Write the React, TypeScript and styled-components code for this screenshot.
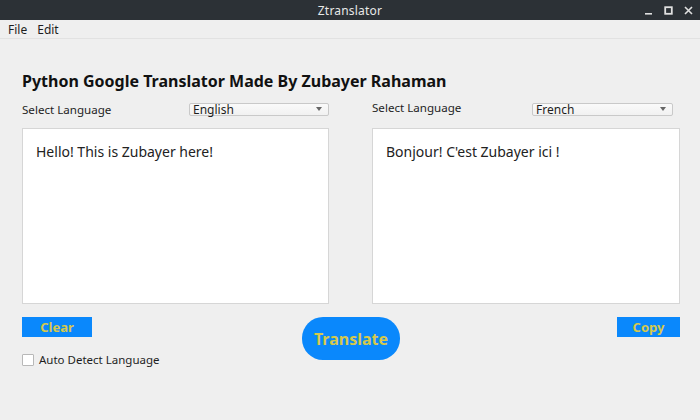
import React, { useState } from 'react';
import styled, { createGlobalStyle } from 'styled-components';

const GlobalStyle = createGlobalStyle`
  html, body {
    margin: 0;
    padding: 0;
    background: #efefef;
  }
  body {
    font-family: 'Noto Sans', 'DejaVu Sans', sans-serif;
    color: #1e1e1e;
  }
`;

const Window = styled.div`
  width: 700px;
  height: 420px;
  display: flex;
  flex-direction: column;
  background: #efefef;
  overflow: hidden;
`;

const TitleBar = styled.div`
  height: 20px;
  background: #2c3136;
  color: #e8e8e8;
  display: grid;
  grid-template-columns: 1fr auto 1fr;
  align-items: center;
  font-size: 12px;
`;

const TitleText = styled.div`
  grid-column: 2;
  letter-spacing: 0.2px;
`;

const WinControls = styled.div`
  grid-column: 3;
  justify-self: end;
  display: flex;
  align-items: center;
  gap: 11px;
  padding-right: 7px;
`;

const MenuBar = styled.div`
  height: 18px;
  display: flex;
  align-items: center;
  gap: 10px;
  padding-left: 8px;
  font-size: 12px;
  border-bottom: 1px solid #e2e2e2;
`;

const Content = styled.div`
  padding: 32px 20px 0 22px;
  display: flex;
  flex-direction: column;
`;

const Heading = styled.h1`
  margin: 0;
  font-size: 16px;
  font-weight: 700;
  line-height: 20px;
  color: #111;
`;

const Columns = styled.div`
  margin-top: 9px;
  display: grid;
  grid-template-columns: 307px 308px;
  column-gap: 43px;
`;

const Column = styled.div`
  display: flex;
  flex-direction: column;
`;

const SelectRow = styled.div<{ $trim: number; $lift: number }>`
  display: flex;
  align-items: center;
  justify-content: space-between;
  height: 18px;
  padding-right: ${(p) => p.$trim}px;
  & > span {
    font-size: 11.6px;
    position: relative;
    top: -${(p) => p.$lift}px;
  }
`;

const Combo = styled.div<{ $w: number }>`
  width: ${(p) => p.$w}px;
  height: 13px;
  box-sizing: border-box;
  border: 1px solid #c9c9c9;
  border-radius: 2px;
  background: linear-gradient(#fafafa, #f1f1f1);
  display: flex;
  align-items: center;
  justify-content: space-between;
  padding: 0 6px 0 3px;
  font-size: 12px;
  line-height: 13px;
`;

const Arrow = styled.span`
  width: 0;
  height: 0;
  border-left: 3.5px solid transparent;
  border-right: 3.5px solid transparent;
  border-top: 4px solid #666;
`;

const TextBox = styled.div`
  margin-top: 10px;
  height: 176px;
  box-sizing: border-box;
  background: #fff;
  border: 1px solid #d6d6d6;
  padding: 14px 13px;
  font-size: 14px;
  line-height: 18px;
  color: #222;
`;

const Bottom = styled.div`
  margin-top: 13px;
  display: grid;
  grid-template-columns: 1fr auto 1fr;
  align-items: start;
`;

const LeftStack = styled.div`
  display: flex;
  flex-direction: column;
  align-items: flex-start;
  gap: 16px;
`;

const FlatButton = styled.button<{ $w: number }>`
  width: ${(p) => p.$w}px;
  height: 20px;
  border: none;
  border-radius: 0;
  background: #0a88fc;
  color: #d6c94c;
  font-family: 'Noto Sans', 'DejaVu Sans', sans-serif;
  font-weight: 700;
  font-size: 13px;
  padding: 0;
  cursor: pointer;
`;

const CopyButton = styled(FlatButton)`
  justify-self: end;
`;

const TranslateButton = styled.button`
  width: 98px;
  height: 43px;
  border: none;
  border-radius: 21px;
  background: #0a88fc;
  color: #d6c94c;
  font-family: 'Noto Sans', 'DejaVu Sans', sans-serif;
  font-weight: 700;
  font-size: 16px;
  padding: 0;
  cursor: pointer;
`;

const CheckLabel = styled.label`
  display: flex;
  align-items: center;
  gap: 5px;
  font-size: 11.5px;
  margin-top: -1px;
`;

const CheckBox = styled.span<{ $on: boolean }>`
  width: 12px;
  height: 12px;
  box-sizing: border-box;
  background: ${(p) => (p.$on ? '#0a88fc' : '#fff')};
  border: 1px solid #b8b8b8;
  border-radius: 1px;
`;

export default function App() {
  const [auto, setAuto] = useState(false);
  return (
    <Window>
      <GlobalStyle />
      <TitleBar>
        <TitleText>Ztranslator</TitleText>
        <WinControls>
          <svg width="9" height="9" viewBox="0 0 9 9">
            <rect x="1" y="7" width="7" height="1.6" fill="#e0e0e0" />
          </svg>
          <svg width="9" height="9" viewBox="0 0 9 9">
            <rect x="1.2" y="1.2" width="6.6" height="6.6" fill="none" stroke="#e0e0e0" strokeWidth="1.8" />
          </svg>
          <svg width="9" height="9" viewBox="0 0 9 9">
            <path d="M1 1 L8 8 M8 1 L1 8" stroke="#e0e0e0" strokeWidth="1.6" />
          </svg>
        </WinControls>
      </TitleBar>
      <MenuBar>
        <span>File</span>
        <span>Edit</span>
      </MenuBar>
      <Content>
        <Heading>Python Google Translator Made By Zubayer Rahaman</Heading>
        <Columns>
          <Column>
            <SelectRow $trim={0} $lift={0}>
              <span>Select Language</span>
              <Combo $w={140}>
                English
                <Arrow />
              </Combo>
            </SelectRow>
            <TextBox>Hello! This is Zubayer here!</TextBox>
          </Column>
          <Column>
            <SelectRow $trim={7} $lift={2}>
              <span>Select Language</span>
              <Combo $w={141}>
                French
                <Arrow />
              </Combo>
            </SelectRow>
            <TextBox>Bonjour! C'est Zubayer ici !</TextBox>
          </Column>
        </Columns>
        <Bottom>
          <LeftStack>
            <FlatButton $w={70}>Clear</FlatButton>
            <CheckLabel onClick={() => setAuto(!auto)}>
              <CheckBox $on={auto} />
              Auto Detect Language
            </CheckLabel>
          </LeftStack>
          <TranslateButton>Translate</TranslateButton>
          <CopyButton $w={63}>Copy</CopyButton>
        </Bottom>
      </Content>
    </Window>
  );
}
